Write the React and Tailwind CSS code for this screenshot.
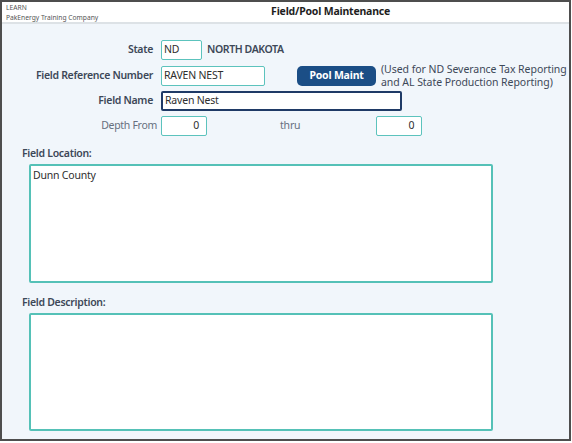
import React from "react";

const font = { fontFamily: '"Noto Sans", "Open Sans", sans-serif' };

function Label({ children, className = "font-semibold text-[#3d4858] w-[151px]" }) {
  return (
    <div className={`shrink-0 text-right text-[10.5px] tracking-[-0.3px] ${className}`}>
      {children}
    </div>
  );
}

function Box({ w, children, border = "border-[1.5px] border-[#5cc3bd]", right = false }) {
  return (
    <div
      className={`${w} ${border} h-[20px] shrink-0 bg-white rounded-[2px] flex items-center px-[2px] text-[10.5px] tracking-[-0.2px] text-[#2e2e2e] ${right ? "justify-end pr-[7px]" : ""}`}
    >
      {children}
    </div>
  );
}

export default function App() {
  return (
    <div className="w-[572px] h-[443px] bg-white" style={font}>
      <div className="w-[571px] h-[441px] border-2 border-[#4e4e4e] flex flex-col">
        <div className="h-[22px] bg-white flex items-stretch border-b-2 border-[#dde2e6] shrink-0">
          <div className="pl-[4px] pt-[1px] flex flex-col text-[6.7px] leading-[10px] text-[#555]">
            <span>LEARN</span>
            <span>PakEnergy Training Company</span>
          </div>
          <div className="flex-1 flex items-center justify-center text-[10.5px] tracking-[-0.2px] font-bold text-[#1e1e1e] pr-[6px]">
            Field/Pool Maintenance
          </div>
        </div>
        <div className="flex-1 bg-[#f1f6fb] flex flex-col pt-[16px]">
          <div className="flex items-center h-[20px]">
            <Label>State</Label>
            <div className="w-[8px]" />
            <Box w="w-[41px]">ND</Box>
            <span className="ml-[5px] text-[10.5px] tracking-[-0.4px] font-semibold text-[#3d4858]">NORTH DAKOTA</span>
          </div>
          <div className="flex items-center h-[20px] mt-[6px]">
            <Label>Field Reference Number</Label>
            <div className="w-[8px]" />
            <Box w="w-[104px]">RAVEN NEST</Box>
            <button className="ml-[32px] w-[79px] h-[20px] rounded-[5px] bg-[#1b4e86] text-white text-[10.5px] tracking-[-0.2px] font-bold flex items-center justify-center">
              Pool Maint
            </button>
            <div className="ml-[5px] text-[10.5px] tracking-[-0.05px] leading-[13.5px] text-[#3d4858] whitespace-nowrap">
              <div>(Used for ND Severance Tax Reporting</div>
              <div>and AL State Production Reporting)</div>
            </div>
          </div>
          <div className="flex items-center h-[20px] mt-[5px]">
            <Label>Field Name</Label>
            <div className="w-[8px]" />
            <Box w="w-[241px]" border="border-2 border-[#1f3a66]">Raven Nest</Box>
          </div>
          <div className="flex items-center h-[20px] mt-[5px]">
            <Label className="font-normal text-[#666f7e] w-[155px]">Depth From</Label>
            <div className="w-[4px]" />
            <Box w="w-[46px]" right>0</Box>
            <span className="ml-[73px] text-[10.5px] tracking-[-0.2px] text-[#666f7e]">thru</span>
            <div className="ml-[76px]" />
            <Box w="w-[46px]" right>0</Box>
          </div>
          <div className="mt-[10px] ml-[20px] text-[10.5px] tracking-[-0.3px] font-semibold text-[#3d4858] leading-[15px]">
            Field Location:
          </div>
          <div className="mt-[3px] ml-[27px] w-[464px] h-[119px] bg-white border-2 border-[#55c1b7] rounded-[2px] px-[2px] pt-[2px] text-[10.5px] tracking-[-0.2px] text-[#2e2e2e]">
            Dunn County
          </div>
          <div className="mt-[12px] ml-[20px] text-[10.5px] tracking-[-0.3px] font-semibold text-[#3d4858] leading-[15px]">
            Field Description:
          </div>
          <div className="mt-[3px] ml-[27px] w-[464px] h-[118px] bg-white border-2 border-[#55c1b7] rounded-[2px]" />
        </div>
      </div>
    </div>
  );
}
